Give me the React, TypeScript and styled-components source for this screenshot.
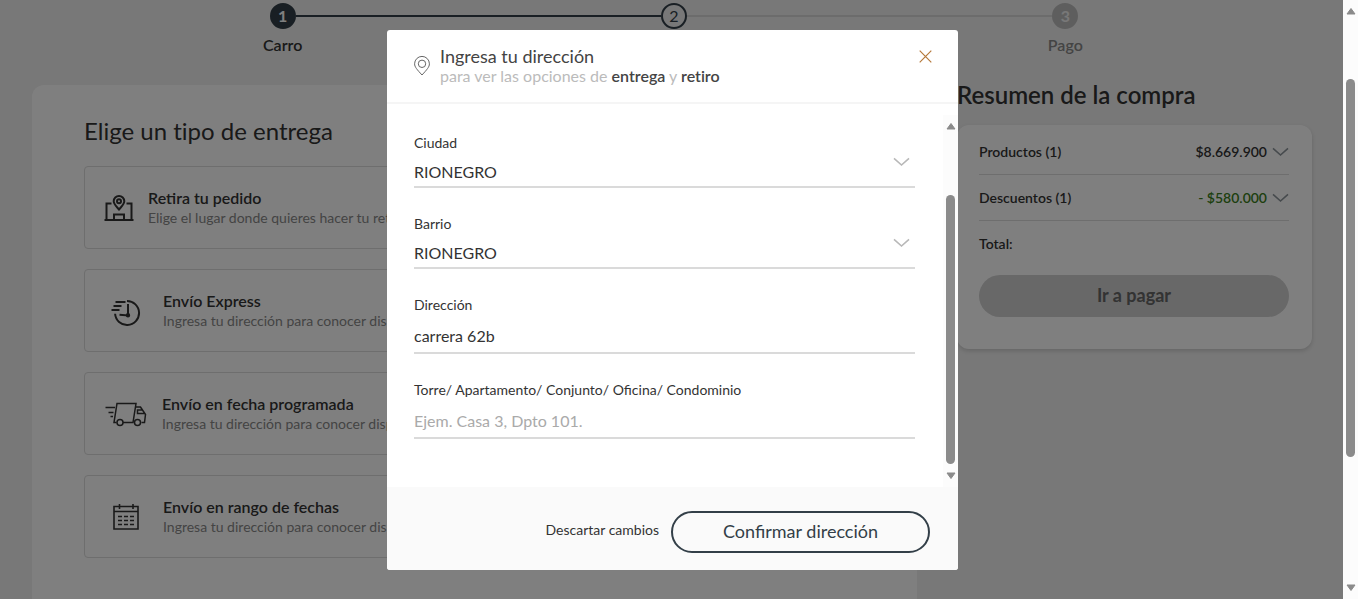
import React from "react";
import styled, { createGlobalStyle } from "styled-components";

const ink = "#333f48";

const GlobalStyle = createGlobalStyle`
  *, *::before, *::after { box-sizing: border-box; }
  body { margin: 0; background: #f0f0f0; color: #333; font-family: Lato, "Liberation Sans", sans-serif; font-size: 14px; font-variant-ligatures: none; }
  h1, h2, h3, p, ol, ul, dl, dd { margin: 0; padding: 0; }
  button, input, select { font-family: inherit; margin: 0; }
  button { cursor: pointer; }
`;

const Screen = styled.div`
  display: flex;
  height: 100vh;
  overflow: hidden;
`;

const Viewport = styled.div`
  position: relative;
  flex: 1;
  min-width: 0;
  overflow: hidden;
`;

const Page = styled.div`
  padding: 3px 31px 0 32px;
`;

/* Stepper */
const Stepper = styled.ol`
  display: grid;
  grid-template-columns: repeat(3, 1fr);
  padding: 0 51px 0 55px;
  list-style: none;
`;

const Step = styled.li`
  display: flex;
  flex-direction: column;
  align-items: center;
  gap: 6px;
`;

const StepTrack = styled.div`
  display: flex;
  align-items: center;
  width: 100%;
`;

const StepLine = styled.span<{ $color: string }>`
  flex: 1;
  height: 2px;
  background: ${(p) => p.$color};
`;

const StepDot = styled.span<{ $state: "done" | "current" | "pending" }>`
  display: flex;
  align-items: center;
  justify-content: center;
  width: 26px;
  height: 26px;
  padding-bottom: 2px;
  border-radius: 50%;
  font-size: 16px;
  font-weight: ${(p) => (p.$state === "current" ? 400 : 700)};
  border: 2px solid ${(p) => (p.$state === "pending" ? "#bdbdbd" : ink)};
  background: ${(p) => (p.$state === "done" ? ink : p.$state === "pending" ? "#bdbdbd" : "transparent")};
  color: ${(p) => (p.$state === "current" ? ink : p.$state === "pending" ? "#f0f0f0" : "#fff")};
`;

const StepLabel = styled.span<{ $muted?: boolean }>`
  font-size: 16px;
  line-height: 20px;
  font-weight: 600;
  color: ${(p) => (p.$muted ? "#888" : "#333")};
`;

const Columns = styled.div`
  display: grid;
  grid-template-columns: minmax(0, 1fr) 355px;
  gap: 40px;
`;

/* Delivery options */
const Delivery = styled.main`
  margin-top: 30px;
  padding: 31px 52px 60px;
  background: #fff;
  border-radius: 12px;
`;

const DeliveryTitle = styled.h1`
  font-size: 24px;
  line-height: 30px;
  font-weight: 400;
  margin-bottom: 20px;
`;

const OptionList = styled.div`
  display: flex;
  flex-direction: column;
  gap: 20px;
`;

const Option = styled.button<{ $iconWidth: number }>`
  display: grid;
  grid-template-columns: ${(p) => p.$iconWidth}px 1fr;
  align-items: center;
  gap: 15px;
  height: 83px;
  padding: 0 19px;
  background: #fff;
  border: 1px solid #dcdcdc;
  border-radius: 4px;
  text-align: left;
  color: #333;
  svg { justify-self: center; }
`;

const OptionName = styled.strong`
  display: block;
  font-size: 16px;
  line-height: 20px;
  font-weight: 600;
`;

const OptionNote = styled.span`
  display: block;
  font-size: 14px;
  line-height: 20px;
  color: #888;
`;

/* Summary */
const Summary = styled.aside`
  margin-top: 25px;
`;

const SummaryTitle = styled.h2`
  font-size: 24px;
  line-height: 30px;
  font-weight: 600;
`;

const SummaryCard = styled.div`
  margin-top: 15px;
  padding: 4px 23px 32px 22px;
  background: #fff;
  border-radius: 12px;
  box-shadow: 0 2px 4px rgba(0, 0, 0, 0.15);
`;

const SummaryRow = styled.div`
  display: flex;
  align-items: center;
  justify-content: space-between;
  height: 46px;
  border-bottom: 1px solid #dcdcdc;
  font-size: 14px;
  font-weight: 600;
`;

const TotalRow = styled(SummaryRow)`
  height: 45px;
  border-bottom: 0;
`;

const Amount = styled.dd<{ $discount?: boolean }>`
  display: flex;
  align-items: center;
  gap: 5px;
  color: ${(p) => (p.$discount ? "#3a7e20" : "#333")};
`;

const PayButton = styled.button`
  display: block;
  width: 100%;
  height: 42px;
  margin-top: 9px;
  padding-bottom: 3px;
  border: 0;
  border-radius: 21px;
  background: #d0d0d0;
  color: #666;
  font-size: 18px;
  font-weight: 700;
`;

/* Modal */
const Overlay = styled.div`
  position: absolute;
  inset: 0;
  display: flex;
  align-items: center;
  justify-content: center;
  padding: 1px 0 0 2px;
  background: rgba(0, 0, 0, 0.5);
`;

const Modal = styled.div`
  display: flex;
  flex-direction: column;
  width: 571px;
  max-width: 100%;
  height: calc(100vh - 59px);
  overflow: hidden;
  background: #fff;
  border-radius: 3px;
`;

const ModalHeader = styled.header`
  display: flex;
  align-items: center;
  gap: 10px;
  padding: 15px 26px 17px 27px;
  border-bottom: 2px solid #f5f5f5;
`;

const Heading = styled.div`
  flex: 1;
  h2 { font-size: 18px; line-height: 22px; font-weight: 400; color: #444; }
  p { font-size: 16px; line-height: 18px; color: #bbb; }
  strong { font-weight: 600; color: #444; }
`;

const CloseButton = styled.button`
  display: flex;
  align-self: flex-start;
  padding: 5px 0;
  border: 0;
  background: none;
`;

const ModalBody = styled.div`
  display: flex;
  flex: 1;
  min-height: 0;
  margin-top: 11px;
`;

const Form = styled.form`
  display: flex;
  flex-direction: column;
  flex: 1;
  gap: 26px;
  padding: 18px 28px 0 27px;
`;

const Field = styled.div`
  position: relative;
  display: flex;
  flex-direction: column;
  label { font-size: 14px; line-height: 20px; font-variant-ligatures: normal; }
`;

const controlStyles = `
  width: 100%;
  padding: 4px 0 0;
  border: 0;
  border-bottom: 2px solid #dadada;
  border-radius: 0;
  background: transparent;
  color: #333;
  font-size: 16px;
  outline: 0;
`;

const Select = styled.select`
  ${controlStyles}
  height: 35px;
  appearance: none;
`;

const Input = styled.input`
  ${controlStyles}
  height: 39px;
  &::placeholder { color: #aaa; opacity: 1; }
`;

const SelectArrow = styled.span`
  position: absolute;
  right: 5px;
  top: 24px;
  display: flex;
  pointer-events: none;
`;

const ModalFooter = styled.footer`
  display: flex;
  align-items: center;
  justify-content: flex-end;
  gap: 12px;
  padding: 24px 28px 17px;
  background: #fafafa;
`;

const DiscardButton = styled.button`
  padding: 0 0 6px;
  border: 0;
  background: none;
  color: #333;
  font-size: 14px;
`;

const ConfirmButton = styled.button`
  width: 259px;
  height: 42px;
  padding-bottom: 3px;
  border: 2px solid ${ink};
  border-radius: 21px;
  background: transparent;
  color: ${ink};
  font-size: 18px;
  font-variant-ligatures: normal;
`;

/* Scroll bars */
const Bar = styled.div`
  display: flex;
  flex-direction: column;
  align-items: center;
  width: 15px;
  padding: 7px 0;
  background: #fcfcfc;
`;

const Spacer = styled.span<{ $grow: number }>`
  flex: ${(p) => p.$grow} 0 0;
`;

const Thumb = styled(Spacer)`
  width: 9px;
  border-radius: 5px;
  background: #8b8b8b;
`;

function Scrollbar({ before, size, after }: { before: number; size: number; after: number }) {
  return (
    <Bar aria-hidden="true">
      <svg width="10" height="8" viewBox="0 0 10 8"><path d="M5 1.500 9 7H1z" fill="#8b8b8b" stroke="#8b8b8b" strokeLinejoin="round" /></svg>
      <Spacer $grow={before} />
      <Thumb $grow={size} />
      <Spacer $grow={after} />
      <svg width="10" height="8" viewBox="0 0 10 8"><path d="M5 6.500 1 1h8z" fill="#8b8b8b" stroke="#8b8b8b" strokeLinejoin="round" /></svg>
    </Bar>
  );
}

const Chevron = ({ color }: { color: string }) => (
  <svg width="17" height="10" viewBox="0 0 17 10" fill="none" stroke={color} strokeWidth="1.6">
    <path d="M1 1.3 8.5 8 16 1.3" />
  </svg>
);

const StoreIcon = () => (
  <svg width="30" height="28" viewBox="0 0 30 28" fill="none" stroke="#333" strokeWidth="2">
    <path d="M.5 26h29M2.500 26V9.500h5M27.500 26V9.500h-5M10 26v-5.500h10V26" />
    <path d="M15 15.500c-3.500-4-5.300-5.500-5.300-8.200a5.300 5.300 0 0 1 10.600 0C20.300 10 18.500 11.500 15 15.500z" />
    <circle cx="15" cy="7.200" r="2" />
  </svg>
);

const ExpressIcon = () => (
  <svg width="30" height="30" viewBox="0 0 30 30" fill="none" stroke="#333" strokeWidth="2">
    <path d="M16 5a12 12 0 1 1-11.900 12.800" />
    <path d="M4.500 6h10M2.500 10h8M.5 14h8M17 8v11.500L8.500 18.700" />
    <circle cx="17" cy="19.200" r="1.200" fill="#333" />
  </svg>
);

const TruckIcon = () => (
  <svg width="42" height="26" viewBox="0 0 42 26" fill="none" stroke="#333" strokeWidth="1.500">
    <path d="M11.500 21.500H9L12 2.500h19L28 21.500H18M30 6h5.500l5 7.500-1 8h-3M29 21.500h1M40 12.500h-7.500V9h5" />
    <circle cx="15" cy="21.500" r="3" />
    <circle cx="32.500" cy="21.500" r="3" />
    <path d="M.5 6.500h9.500M3.500 11.500h5M5.500 15.500h2.500" />
  </svg>
);

const CalendarIcon = () => (
  <svg width="26" height="26" viewBox="0 0 26 26" fill="none" stroke="#333" strokeWidth="1.600">
    <path d="M1 2.500h24v22.500H1zM1 7.500h24M6.500 0v5M20 0v5" />
    <path d="M5 12.500h16M5 16.500h16M5 20.500h16" strokeDasharray="4 2" />
  </svg>
);

const PinIcon = () => (
  <svg width="16" height="22" viewBox="0 -2 16 22" fill="none" stroke="#666" strokeWidth="1">
    <path d="M8 19C3 13.500.6 11 .6 7.800a7.400 7.400 0 0 1 14.800 0C15.400 11 13 13.500 8 19z" />
    <circle cx="8" cy="7.800" r="3.700" />
  </svg>
);

const options = [
  { name: "Retira tu pedido", note: "Elige el lugar donde quieres hacer tu retiro", icon: <StoreIcon />, width: 29 },
  { name: "Envío Express", note: "Ingresa tu dirección para conocer disponibilidad", icon: <ExpressIcon />, width: 44 },
  { name: "Envío en fecha programada", note: "Ingresa tu dirección para conocer disponibilidad", icon: <TruckIcon />, width: 43 },
  { name: "Envío en rango de fechas", note: "Ingresa tu dirección para conocer disponibilidad", icon: <CalendarIcon />, width: 44 },
];

export default function App() {
  return (
    <Screen>
      <GlobalStyle />
      <Viewport>
        <Page>
          <Stepper>
            <Step>
              <StepTrack><StepLine $color="transparent" /><StepDot $state="done">1</StepDot><StepLine $color={ink} /></StepTrack>
              <StepLabel>Carro</StepLabel>
            </Step>
            <Step>
              <StepTrack><StepLine $color={ink} /><StepDot $state="current">2</StepDot><StepLine $color="#d8d8d8" /></StepTrack>
              <StepLabel>Entrega</StepLabel>
            </Step>
            <Step>
              <StepTrack><StepLine $color="#d8d8d8" /><StepDot $state="pending">3</StepDot><StepLine $color="transparent" /></StepTrack>
              <StepLabel $muted>Pago</StepLabel>
            </Step>
          </Stepper>
          <Columns>
            <Delivery>
              <DeliveryTitle>Elige un tipo de entrega</DeliveryTitle>
              <OptionList>
                {options.map((o) => (
                  <Option key={o.name} type="button" $iconWidth={o.width}>
                    {o.icon}
                    <span>
                      <OptionName>{o.name}</OptionName>
                      <OptionNote>{o.note}</OptionNote>
                    </span>
                  </Option>
                ))}
              </OptionList>
            </Delivery>
            <Summary>
              <SummaryTitle>Resumen de la compra</SummaryTitle>
              <SummaryCard>
                <dl>
                  <SummaryRow><dt>Productos (1)</dt><Amount>$8.669.900 <Chevron color="#8d959b" /></Amount></SummaryRow>
                  <SummaryRow><dt>Descuentos (1)</dt><Amount $discount>- $580.000 <Chevron color="#8d959b" /></Amount></SummaryRow>
                  <TotalRow><dt>Total:</dt></TotalRow>
                </dl>
                <PayButton type="button">Ir a pagar</PayButton>
              </SummaryCard>
            </Summary>
          </Columns>
        </Page>
        <Overlay>
          <Modal role="dialog" aria-modal="true" aria-labelledby="address-title">
            <ModalHeader>
              <PinIcon />
              <Heading>
                <h2 id="address-title">Ingresa tu dirección</h2>
                <p>para ver las opciones de <strong>entrega</strong> y <strong>retiro</strong></p>
              </Heading>
              <CloseButton type="button" aria-label="Cerrar">
                <svg width="13" height="13" viewBox="0 0 13 13" stroke="#b5793c" strokeWidth="1.200"><path d="M.7.7l11.600 11.600M12.300.7.7 12.300" /></svg>
              </CloseButton>
            </ModalHeader>
            <ModalBody>
              <Form id="address-form">
                <Field>
                  <label htmlFor="city">Ciudad</label>
                  <Select id="city" defaultValue="RIONEGRO"><option>RIONEGRO</option></Select>
                  <SelectArrow><Chevron color="#b8b8b8" /></SelectArrow>
                </Field>
                <Field>
                  <label htmlFor="district">Barrio</label>
                  <Select id="district" defaultValue="RIONEGRO"><option>RIONEGRO</option></Select>
                  <SelectArrow><Chevron color="#b8b8b8" /></SelectArrow>
                </Field>
                <Field>
                  <label htmlFor="address">Dirección</label>
                  <Input id="address" type="text" defaultValue="carrera 62b" />
                </Field>
                <Field>
                  <label htmlFor="unit">Torre/ Apartamento/ Conjunto/ Oficina/ Condominio</label>
                  <Input id="unit" type="text" placeholder="Ejem. Casa 3, Dpto 101." />
                </Field>
              </Form>
              <Scrollbar before={65} size={268} after={8} />
            </ModalBody>
            <ModalFooter>
              <DiscardButton type="button">Descartar cambios</DiscardButton>
              <ConfirmButton type="submit" form="address-form">Confirmar dirección</ConfirmButton>
            </ModalFooter>
          </Modal>
        </Overlay>
      </Viewport>
      <Scrollbar before={64} size={376} after={127} />
    </Screen>
  );
}
